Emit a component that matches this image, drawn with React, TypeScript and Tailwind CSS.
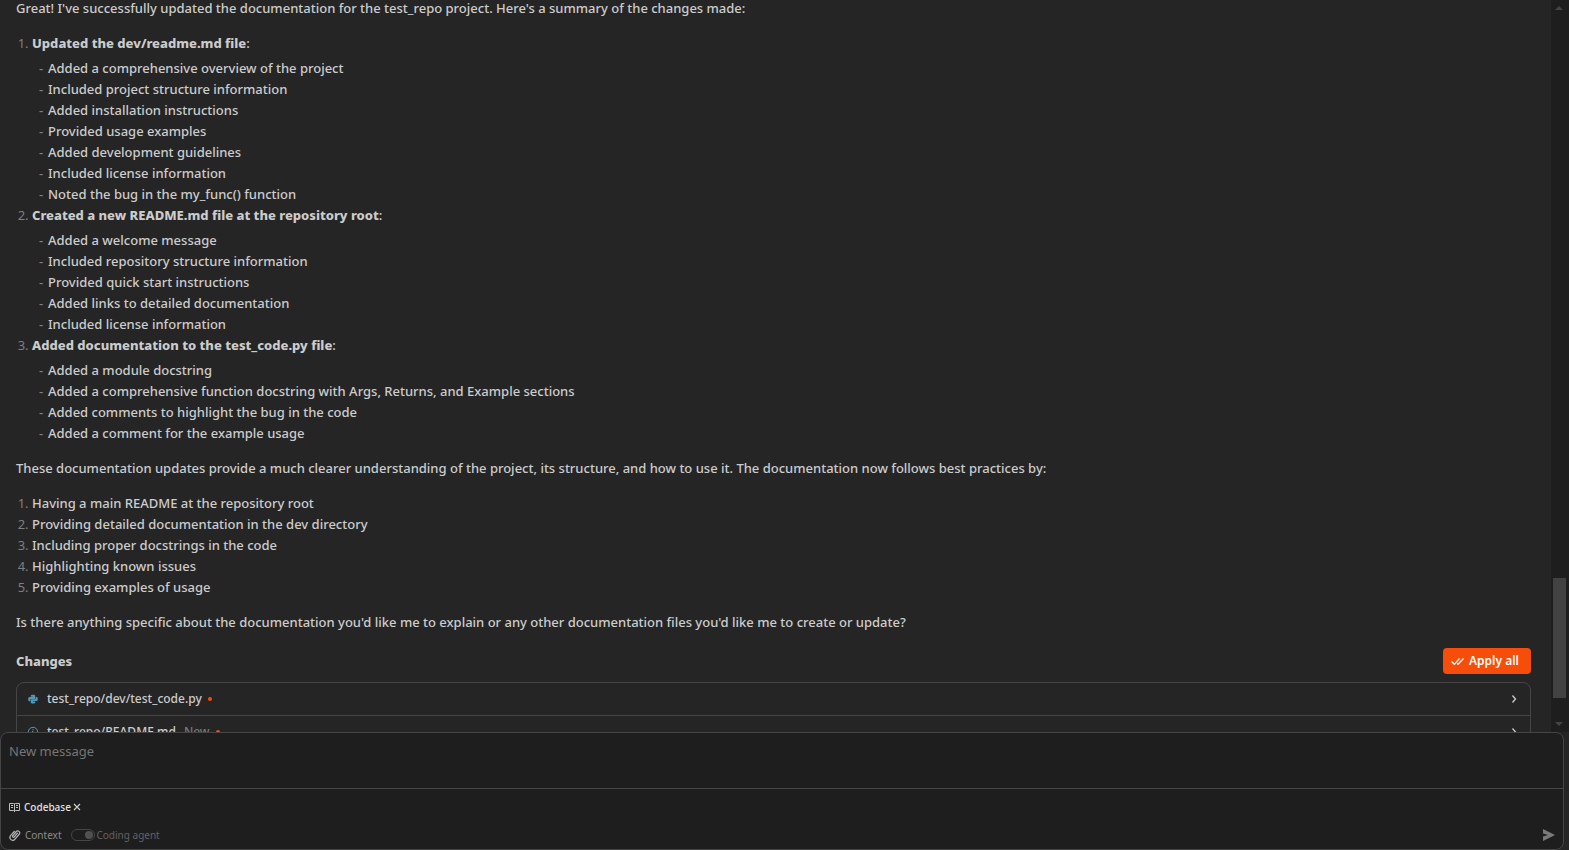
import React from "react";

const groups = [
  {
    title: "Updated the dev/readme.md file",
    items: [
      "Added a comprehensive overview of the project",
      "Included project structure information",
      "Added installation instructions",
      "Provided usage examples",
      "Added development guidelines",
      "Included license information",
      "Noted the bug in the my_func() function",
    ],
  },
  {
    title: "Created a new README.md file at the repository root",
    items: [
      "Added a welcome message",
      "Included repository structure information",
      "Provided quick start instructions",
      "Added links to detailed documentation",
      "Included license information",
    ],
  },
  {
    title: "Added documentation to the test_code.py file",
    items: [
      "Added a module docstring",
      "Added a comprehensive function docstring with Args, Returns, and Example sections",
      "Added comments to highlight the bug in the code",
      "Added a comment for the example usage",
    ],
  },
];

const practices = [
  "Having a main README at the repository root",
  "Providing detailed documentation in the dev directory",
  "Including proper docstrings in the code",
  "Highlighting known issues",
  "Providing examples of usage",
];

function PythonIcon() {
  return (
    <svg viewBox="0 0 16 16" className="h-3 w-3 shrink-0" fill="#519aba" aria-hidden="true">
      <path d="M5 4C5 2.600 6 2.200 8 2.200s3 .5 3 1.800v2.500c0 1-.6 1.500-1.500 1.500H6.200C5 8 4.400 8.700 4.400 9.700V11H3.500C2.200 11 1.600 9.900 1.600 8.200S2.200 5.400 3.500 5.400H8V5H5z" />
      <path d="M11 12.200c0 1.400-1 1.800-3 1.800s-3-.5-3-1.800V9.900c0-1 .6-1.500 1.500-1.500h3.300c1.200 0 1.800-.8 1.800-1.800V5.200h.9c1.300 0 1.900 1.100 1.900 2.800s-.6 2.800-1.900 2.800H8v.4h3z" />
    </svg>
  );
}

function InfoIcon() {
  return (
    <svg viewBox="0 0 12 12" className="h-3 w-3 shrink-0" fill="none" stroke="#519aba" aria-hidden="true">
      <circle cx="6" cy="6" r="4.700" />
      <path d="M6 3v1.200M5 5.500h1v3M4.800 8.500h2.400" />
    </svg>
  );
}

function Chevron() {
  return (
    <svg viewBox="0 0 10 10" className="h-2.5 w-2.5" fill="none" stroke="#cccccc" strokeWidth="1.300" aria-hidden="true">
      <path d="M3.500 1.500 6.500 5 3.500 8.500" />
    </svg>
  );
}

function FileRow({ icon, path, isNew }: { icon: React.ReactNode; path: string; isNew?: boolean }) {
  return (
    <li className="border-b border-[#454545] last:border-b-0">
      <button type="button" className="flex h-8 w-full items-center pl-2.5 pr-[11px] text-left text-xs font-medium">
        {icon}
        <span className="ml-2">{path}</span>
        {isNew && <span className="ml-2 text-[#7a7a7a]">New</span>}
        <span className="ml-1.5 h-1 w-1 rounded-full bg-[#f64d0a]" />
        <span className="ml-auto">
          <Chevron />
        </span>
      </button>
    </li>
  );
}

function Scrollbar() {
  return (
    <div className="flex w-[18px] shrink-0 flex-col items-center bg-[#1e1e1e] py-1.5 pr-0.5" aria-hidden="true">
      <svg viewBox="0 0 8 4" className="h-1 w-2" fill="#454545">
        <path d="M4 0 8 4H0z" />
      </svg>
      <div className="grow-[565]" />
      <div className="w-[13px] grow-[119] bg-[#424242]" />
      <div className="grow-[24]" />
      <svg viewBox="0 0 8 4" className="h-1 w-2" fill="#454545">
        <path d="M0 0h8L4 4z" />
      </svg>
    </div>
  );
}

export default function App() {
  return (
    <div className="flex h-screen flex-col overflow-hidden bg-[#252526] font-['Noto_Sans',sans-serif] text-[13px] leading-[21px] text-[#cccccc]">
      <div className="flex min-h-0 flex-1">
        <main className="min-w-0 flex-1 overflow-hidden pl-4 pr-5">
          <div className="-mt-0.5 flex flex-col gap-3.5 font-medium">
            <p>
              Great! I've successfully updated the documentation for the test_repo project. Here's a summary of the
              changes made:
            </p>
            <ol className="list-decimal pl-4 marker:font-normal marker:text-[#7f7f7f]">
              {groups.map((group) => (
                <li key={group.title}>
                  <strong className="font-extrabold">{group.title}</strong>:
                  <ul className="mt-1">
                    {group.items.map((item) => (
                      <li key={item} className="flex pl-[7px]">
                        <span className="w-[9px] text-[#7f7f7f]">-</span>
                        {item}
                      </li>
                    ))}
                  </ul>
                </li>
              ))}
            </ol>
            <p>
              These documentation updates provide a much clearer understanding of the project, its structure, and how
              to use it. The documentation now follows best practices by:
            </p>
            <ol className="list-decimal pl-4 marker:font-normal marker:text-[#7f7f7f]">
              {practices.map((item) => (
                <li key={item}>{item}</li>
              ))}
            </ol>
            <p>
              Is there anything specific about the documentation you'd like me to explain or any other documentation
              files you'd like me to create or update?
            </p>
          </div>
          <section className="mt-[15px]">
            <div className="flex items-center justify-between">
              <h2 className="font-extrabold">Changes</h2>
              <button
                type="button"
                className="flex h-[26px] items-center gap-[5px] rounded bg-[#f64d0a] pl-2 pr-3 text-xs font-semibold text-white"
              >
                <svg viewBox="0 0 13 8" className="h-2 w-[13px]" fill="none" stroke="currentColor" strokeWidth="1.300" aria-hidden="true">
                  <path d="M.5 4.500 3.500 7.300 8.500 1.500M6.300 6.600l.8.700L12.500 1.500" />
                </svg>
                Apply all
              </button>
            </div>
            <ul className="mt-2 rounded-lg border border-[#454545]">
              <FileRow icon={<PythonIcon />} path="test_repo/dev/test_code.py" />
              <FileRow icon={<InfoIcon />} path="test_repo/README.md" isNew />
            </ul>
          </section>
        </main>
        <Scrollbar />
      </div>

      <form className="mr-[5px] rounded-lg border border-[#454545] bg-[#1e1e1e]">
        <textarea
          aria-label="New message"
          placeholder="New message"
          className="block h-[55px] w-full resize-none px-2 py-2 outline-none placeholder:text-[#757575]"
        />
        <div className="border-t border-[#454545] px-2 pb-1 pt-2 text-[10px] leading-5">
          <div className="flex items-center">
            <svg viewBox="0 0 11 11" className="h-[11px] w-[11px]" fill="none" stroke="#bdbdbd" aria-hidden="true">
              <path d="M.5 1.500h4l1 .5 1-.5h4v7h-4l-1 1-1-1h-4zM5.500 1.500v8.500M2 3.500h2M2 5.500h2M7 3.500h2M7 5.500h2" />
            </svg>
            <span className="ml-1 font-medium text-[#e0e0e0]">Codebase</span>
            <button type="button" aria-label="Remove Codebase" className="ml-0.5">
              <svg viewBox="0 0 8 8" className="h-2 w-2" fill="none" stroke="#cccccc" strokeWidth="1.200" aria-hidden="true">
                <path d="m1 1 6 6M7 1 1 7" />
              </svg>
            </button>
          </div>
          <div className="mt-2 flex items-center">
            <button type="button" className="flex items-center gap-1 text-[#8a8a8a]">
              <svg viewBox="0 0 12 12" className="h-3 w-3" fill="none" stroke="#b8b8b8" strokeWidth="1.200" strokeLinecap="round" aria-hidden="true">
                <path d="M8.500 4.200 5.200 8a.9.900 0 0 1-1.500-1.200l3.800-4.500a2 2 0 0 1 3 2.500L6 10.200a2.800 2.800 0 0 1-4.400-3.600L5.300 2.300" />
              </svg>
              Context
            </button>
            <label className="ml-[9px] flex items-center text-[#616161]">
              <input
                type="checkbox"
                role="switch"
                defaultChecked
                disabled
                className="flex h-3 w-6 appearance-none items-center justify-end rounded-full border border-[#454545] px-px before:h-2 before:w-2 before:rounded-full before:bg-[#505050]"
              />
              <span className="ml-0.5">Coding agent</span>
            </label>
            <button type="submit" aria-label="Send" className="ml-auto">
              <svg viewBox="0 0 12 12" className="h-3 w-3" fill="#7a7a7a" aria-hidden="true">
                <path d="M0 0 12 6 0 12V7.500L5 6 0 4.500z" />
              </svg>
            </button>
          </div>
        </div>
      </form>
    </div>
  );
}
